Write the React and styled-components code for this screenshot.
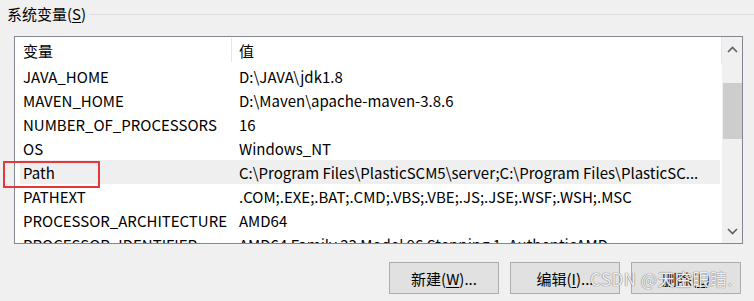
import React from "react";
import styled, { createGlobalStyle } from "styled-components";

const rows = [
  ["JAVA_HOME", "D:\\JAVA\\jdk1.8"],
  ["MAVEN_HOME", "D:\\Maven\\apache-maven-3.8.6"],
  ["NUMBER_OF_PROCESSORS", "16"],
  ["OS", "Windows_NT"],
  ["Path", "C:\\Program Files\\PlasticSCM5\\server;C:\\Program Files\\PlasticSC..."],
  ["PATHEXT", ".COM;.EXE;.BAT;.CMD;.VBS;.VBE;.JS;.JSE;.WSF;.WSH;.MSC"],
  ["PROCESSOR_ARCHITECTURE", "AMD64"],
  ["PROCESSOR_IDENTIFIER", "AMD64 Family 23 Model 96 Stepping 1, AuthenticAMD"],
];

const GlobalStyle = createGlobalStyle`
  body {
    margin: 0;
    background: #f0f0f0;
    font-family: "Noto Sans CJK SC", "Noto Sans", sans-serif;
    font-size: 15px;
    color: #000;
  }
`;

const Page = styled.div`
  position: relative;
  width: 754px;
  height: 301px;
  overflow: hidden;
`;

const GroupHeader = styled.div`
  display: flex;
  align-items: center;
  height: 28px;
  padding-left: 7px;
  gap: 3px;
`;

const GroupLabel = styled.span`
  line-height: 28px;
  u {
    text-decoration: underline;
    text-underline-offset: 2px;
  }
`;

const GroupLine = styled.div`
  flex: 1;
  height: 1px;
  background: #dcdcdc;
`;

const ListBox = styled.div`
  display: flex;
  margin: 8px 0 0 14px;
  width: 727px;
  height: 206px;
  border: 1px solid #828790;
  background: #fff;
  overflow: hidden;
`;

const Table = styled.div`
  flex: 1;
  display: flex;
  flex-direction: column;
`;

const HeaderRow = styled.div`
  display: grid;
  grid-template-columns: 217px 1fr;
  height: 27px;
  flex-shrink: 0;
  border-right: 1px solid #e5e5e5;
`;

const HeaderCell = styled.div`
  display: flex;
  align-items: center;
  padding-left: ${(p) => p.$pad}px;
  border-right: ${(p) => (p.$sep ? "1px solid #e5e5e5" : "none")};
  margin: 1px 0 2px;
`;

const Row = styled.div`
  display: grid;
  grid-template-columns: 212px 1fr;
  height: 24px;
  flex-shrink: 0;
  margin: 0 2px 0 5px;
  background: ${(p) => (p.$selected ? "#efefef" : "transparent")};
`;

const Cell = styled.div`
  display: flex;
  align-items: center;
  padding-left: ${(p) => p.$pad}px;
  white-space: nowrap;
  overflow: hidden;
`;

const Scrollbar = styled.div`
  width: 20px;
  flex-shrink: 0;
  background: #f0f0f0;
  display: flex;
  flex-direction: column;
  align-items: center;
`;

const Arrow = styled.div`
  height: 24px;
  width: 100%;
  display: flex;
  align-items: center;
  justify-content: center;
`;

const Thumb = styled.div`
  width: 19px;
  height: 56px;
  margin-top: 22px;
  background: #cdcdcd;
`;

const Spacer = styled.div`
  flex: 1;
`;

const Buttons = styled.div`
  display: flex;
  justify-content: flex-end;
  gap: 11px;
  margin-top: 18px;
  padding-right: 13px;
`;

const Button = styled.button`
  width: 110px;
  height: 32px;
  background: #e1e1e1;
  border: 1px solid #adadad;
  font-family: inherit;
  font-size: 15px;
  color: #000;
  padding: 0;
  u {
    text-underline-offset: 2px;
  }
`;

const Highlight = styled.div`
  position: absolute;
  left: 3px;
  top: 161px;
  width: 93px;
  height: 23px;
  border: 2px solid #e8373c;
`;

const Watermark = styled.div`
  position: absolute;
  left: 590px;
  top: 266px;
  font-size: 17px;
  color: rgba(255, 255, 255, 0.9);
  text-shadow: 0 0 1px #777, 0 0 1px #777;
  letter-spacing: 0.5px;
  white-space: nowrap;
`;

const Chevron = ({ up }) => (
  <svg width="11" height="7" viewBox="0 0 11 7">
    <polyline
      points={up ? "1,6 5.5,1.5 10,6" : "1,1 5.5,5.5 10,1"}
      fill="none"
      stroke="#606060"
      strokeWidth="1.6"
    />
  </svg>
);

export default function App() {
  return (
    <Page>
      <GlobalStyle />
      <GroupHeader>
        <GroupLabel>
          系统变量(<u>S</u>)
        </GroupLabel>
        <GroupLine />
      </GroupHeader>
      <ListBox>
        <Table>
          <HeaderRow>
            <HeaderCell $pad={8} $sep>
              变量
            </HeaderCell>
            <HeaderCell $pad={7}>值</HeaderCell>
          </HeaderRow>
          {rows.map(([name, value]) => (
            <Row key={name} $selected={name === "Path"}>
              <Cell $pad={3}>{name}</Cell>
              <Cell $pad={7}>{value}</Cell>
            </Row>
          ))}
        </Table>
        <Scrollbar>
          <Arrow>
            <Chevron up />
          </Arrow>
          <Thumb />
          <Spacer />
          <Arrow>
            <Chevron />
          </Arrow>
        </Scrollbar>
      </ListBox>
      <Buttons>
        <Button>
          新建(<u>W</u>)...
        </Button>
        <Button>
          编辑(<u>I</u>)...
        </Button>
        <Button>
          删除(<u>L</u>)
        </Button>
      </Buttons>
      <Highlight />
      <Watermark>CSDN @天空眼睛.</Watermark>
    </Page>
  );
}
